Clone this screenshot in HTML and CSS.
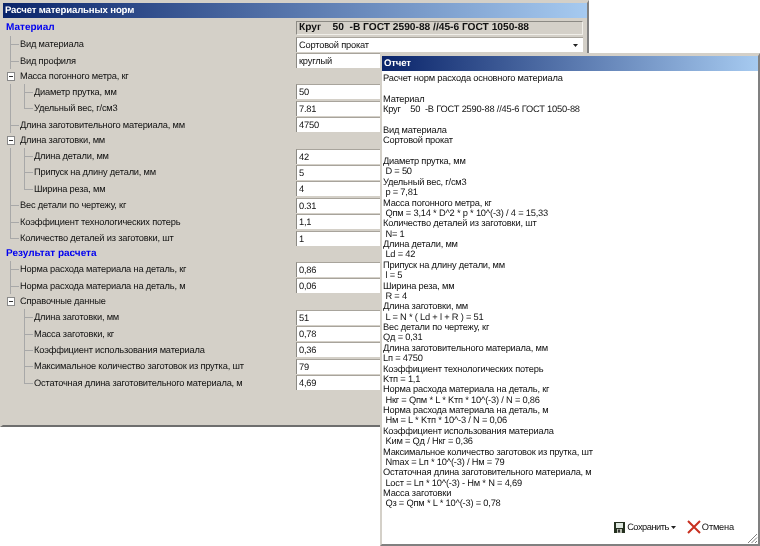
FILE: index.html
```html
<!DOCTYPE html>
<html lang="ru">
<head>
<meta charset="utf-8">
<title>Расчет материальных норм</title>
<link rel="stylesheet" href="styles.css">
</head>
<body>
<section class="win main">
  <div class="title">Расчет материальных норм</div>
  <div class="tree">
    <div class="row head"><span class="lbl sect">Материал</span><div class="cell ro">Круг &nbsp;&nbsp; 50 &nbsp;-В ГОСТ 2590-88 //45-6 ГОСТ 1050-88</div></div>
    <div class="row"><i class="b"></i><span class="lbl">Вид материала</span><div class="cell combo">Сортовой прокат<svg class="arrow" width="5" height="3" viewBox="0 0 5 3"><path d="M0 0h5L2.500 3z"/></svg></div></div>
    <div class="row"><i class="b"></i><span class="lbl">Вид профиля</span><div class="cell">круглый</div></div>
    <div class="row group"><i class="m"></i><span class="lbl">Масса погонного метра, кг</span></div>
    <div class="row"><i class="v"></i><i class="b"></i><span class="lbl">Диаметр прутка, мм</span><div class="cell">50</div></div>
    <div class="row"><i class="v"></i><i class="e"></i><span class="lbl">Удельный вес, г/см3</span><div class="cell">7.81</div></div>
    <div class="row"><i class="b"></i><span class="lbl">Длина заготовительного материала, мм</span><div class="cell">4750</div></div>
    <div class="row group"><i class="m"></i><span class="lbl">Длина заготовки, мм</span></div>
    <div class="row"><i class="v"></i><i class="b"></i><span class="lbl">Длина детали, мм</span><div class="cell">42</div></div>
    <div class="row"><i class="v"></i><i class="b"></i><span class="lbl">Припуск на длину детали, мм</span><div class="cell">5</div></div>
    <div class="row"><i class="v"></i><i class="e"></i><span class="lbl">Ширина реза, мм</span><div class="cell">4</div></div>
    <div class="row"><i class="b"></i><span class="lbl">Вес детали по чертежу, кг</span><div class="cell">0.31</div></div>
    <div class="row"><i class="b"></i><span class="lbl">Коэффициент технологических потерь</span><div class="cell">1,1</div></div>
    <div class="row"><i class="e"></i><span class="lbl">Количество деталей из заготовки, шт</span><div class="cell">1</div></div>
    <div class="row group"><span class="lbl sect">Результат расчета</span></div>
    <div class="row"><i class="b"></i><span class="lbl">Норма расхода материала на деталь, кг</span><div class="cell">0,86</div></div>
    <div class="row"><i class="b"></i><span class="lbl">Норма расхода материала на деталь, м</span><div class="cell">0,06</div></div>
    <div class="row group"><i class="m"></i><span class="lbl">Справочные данные</span></div>
    <div class="row"><i class="n"></i><i class="b"></i><span class="lbl">Длина заготовки, мм</span><div class="cell">51</div></div>
    <div class="row"><i class="n"></i><i class="b"></i><span class="lbl">Масса заготовки, кг</span><div class="cell">0,78</div></div>
    <div class="row"><i class="n"></i><i class="b"></i><span class="lbl">Коэффициент использования материала</span><div class="cell">0,36</div></div>
    <div class="row"><i class="n"></i><i class="b"></i><span class="lbl">Максимальное количество заготовок из прутка, шт</span><div class="cell">79</div></div>
    <div class="row"><i class="n"></i><i class="e"></i><span class="lbl">Остаточная длина заготовительного материала, м</span><div class="cell">4,69</div></div>
  </div>
</section>

<section class="win report">
  <div class="title">Отчет</div>
  <pre class="text">Расчет норм расхода основного материала

Материал
Круг    50  -В ГОСТ 2590-88 //45-6 ГОСТ 1050-88

Вид материала
Сортовой прокат

Диаметр прутка, мм
 D = 50
Удельный вес, г/см3
 p = 7,81
Масса погонного метра, кг
 Qпм = 3,14 * D^2 * p * 10^(-3) / 4 = 15,33
Количество деталей из заготовки, шт
 N= 1
Длина детали, мм
 Ld = 42
Припуск на длину детали, мм
 l = 5
Ширина реза, мм
 R = 4
Длина заготовки, мм
 L = N * ( Ld + l + R ) = 51
Вес детали по чертежу, кг
Qд = 0,31
Длина заготовительного материала, мм
Lп = 4750
Коэффициент технологических потерь
Kтп = 1,1
Норма расхода материала на деталь, кг
 Нкг = Qпм * L * Kтп * 10^(-3) / N = 0,86
Норма расхода материала на деталь, м
 Нм = L * Kтп * 10^-3 / N = 0,06
Коэффициент использования материала
 Kим = Qд / Нкг = 0,36
Максимальное количество заготовок из прутка, шт
 Nmax = Lп * 10^(-3) / Нм = 79
Остаточная длина заготовительного материала, м
 Lост = Lп * 10^(-3) - Нм * N = 4,69
Масса заготовки
 Qз = Qпм * L * 10^(-3) = 0,78</pre>
  <div class="actions">
    <span class="btn save">
      <svg width="11" height="11" viewBox="0 0 11 11"><rect width="11" height="11" fill="#24301f"/><rect x="2" y="1" width="7" height="5" fill="#dfe8e0"/><rect x="3" y="7" width="5" height="4" fill="#b8bdb0"/><rect x="4" y="7.500" width="2" height="3" fill="#333"/></svg>
      <span class="save-label">Сохранить</span><svg class="arrow small" width="5" height="3" viewBox="0 0 5 3"><path d="M0 0h5L2.500 3z"/></svg>
    </span>
    <span class="btn cancel">
      <svg width="14" height="14" viewBox="0 0 14 14"><path d="M1 1l12 12M13 1L1 13" stroke="#c83020" stroke-width="2" fill="none"/></svg>
      Отмена
    </span>
  </div>
  <svg class="grip" width="11" height="11" viewBox="0 0 11 11"><path d="M10 1L1 10M10 4.500L4.500 10M10 8L8 10" stroke="#808080" fill="none"/></svg>
</section>
</body>
</html>
```
FILE: styles.css
```css
html, body { margin: 0; height: 100%; background: #fff; overflow: hidden; }
body {
  position: relative;
  width: 760px;
  height: 546px;
  font-family: "Liberation Sans", Arial, sans-serif;
  font-size: 9.3px;
  letter-spacing: -0.2px;
  text-rendering: geometricPrecision;
  color: #111;
}
.win {
  position: absolute;
  box-sizing: border-box;
  border-style: solid;
  border-color: #d4d0c8 #808080 #6e6e6e #d4d0c8;
  filter: blur(0.2px);
}
.main {
  left: 0; top: 0;
  width: 589px; height: 427px;
  background: #d4d0c8;
  border-width: 3px 2px 2px 3px;
}
.report {
  left: 380px; top: 53px;
  width: 380px; height: 493px;
  background: #fff;
  border-width: 3px 2px 2px 2px;
  border-color: #d4d0c8 #808080 #808080 #d4d0c8;
  display: flex;
  flex-direction: column;
}
.title {
  height: 15px;
  line-height: 15px;
  padding-left: 2px;
  font-weight: 700;
  font-size: 9.6px;
  letter-spacing: -0.15px;
  color: #fff;
  background: linear-gradient(90deg, #0a246a, #a6caf0);
}
.tree { padding-top: 1px; }
.row {
  display: flex;
  align-items: center;
  height: 16.45px;
  padding-left: 3px;
  padding-right: 4px;
}
.row.head { height: 17px; }
.row.group { height: 14.8px; }
.lbl { white-space: nowrap; padding-left: 1px; }
.sect { color: #0000f0; font-weight: 700; font-size: 10px; letter-spacing: 0; padding-left: 0; }
.cell {
  margin-left: auto;
  box-sizing: border-box;
  position: relative;
  flex: none;
  width: 287px;
  height: 15px;
  line-height: 14px;
  padding-left: 2px;
  background: #fff;
  border-top: 1px solid #a8a49c;
  border-left: 1px solid #8c8a84;
  white-space: nowrap;
}
.ro {
  height: 14px;
  line-height: 12px;
  background: #d4d0c8;
  font-weight: 700;
  font-size: 10.2px;
  letter-spacing: 0;
  color: #111;
  border: 1px solid #f0eee8;
  border-top-color: #8c8a84;
  border-left-color: #8c8a84;
}
.combo .arrow { position: absolute; right: 5px; top: 6px; }
.arrow path { fill: #222; }
.row > i {
  flex: none;
  display: block;
  position: relative;
  align-self: stretch;
}
/* tree guides: v = level-1 line, n = blank level, b = branch, e = elbow, m = minus box */
.row > .v { width: 18px; background: linear-gradient(#a8a8a8, #a8a8a8) 4px 0 / 1px 100% no-repeat; }
.row > .n { width: 18px; }
.row > .b, .row > .e { width: 13px; }
.row > .b { background: linear-gradient(#a8a8a8, #a8a8a8) 4px 0 / 1px 100% no-repeat; }
.row > .b::after, .row > .e::after {
  content: "";
  position: absolute;
  left: 4px; right: 0; top: 50%;
  border-top: 1px solid #a8a8a8;
}
.row > .v + .b, .row > .n + .b { width: 9px; background-position-x: 0; }
.row > .v + .b::after, .row > .v + .e::after, .row > .n + .b::after, .row > .n + .e::after { left: 0; }
.row > .e { background: linear-gradient(#a8a8a8, #a8a8a8) 4px 0 / 1px 50% no-repeat; }
.row > .v + .e, .row > .n + .e { width: 9px; background: linear-gradient(#a8a8a8, #a8a8a8) 0 0 / 1px 50% no-repeat; }
.row > .m {
  width: 13px;
  align-self: center;
  height: 9px;
  background:
    linear-gradient(#333, #333) 3px 4px / 4px 1px no-repeat,
    linear-gradient(#fff, #fff) 2px 1px / 6px 7px no-repeat,
    linear-gradient(#8a8a8a, #8a8a8a) 1px 0 / 8px 9px no-repeat;
}
.text {
  margin: 0;
  padding: 2px 0 0 1px;
  font: inherit;
  letter-spacing: inherit;
  line-height: 10.37px;
  flex: 1;
}
.actions {
  display: flex;
  justify-content: flex-end;
  align-items: center;
  gap: 11px;
  padding: 0 24px 10px 0;
}
.btn { display: inline-flex; align-items: center; gap: 2px; }
.cancel { gap: 1px; }
.save-label { letter-spacing: -0.5px; }
.arrow.small { margin-left: 0; }
.grip { position: absolute; right: 0; bottom: 0; }
```
